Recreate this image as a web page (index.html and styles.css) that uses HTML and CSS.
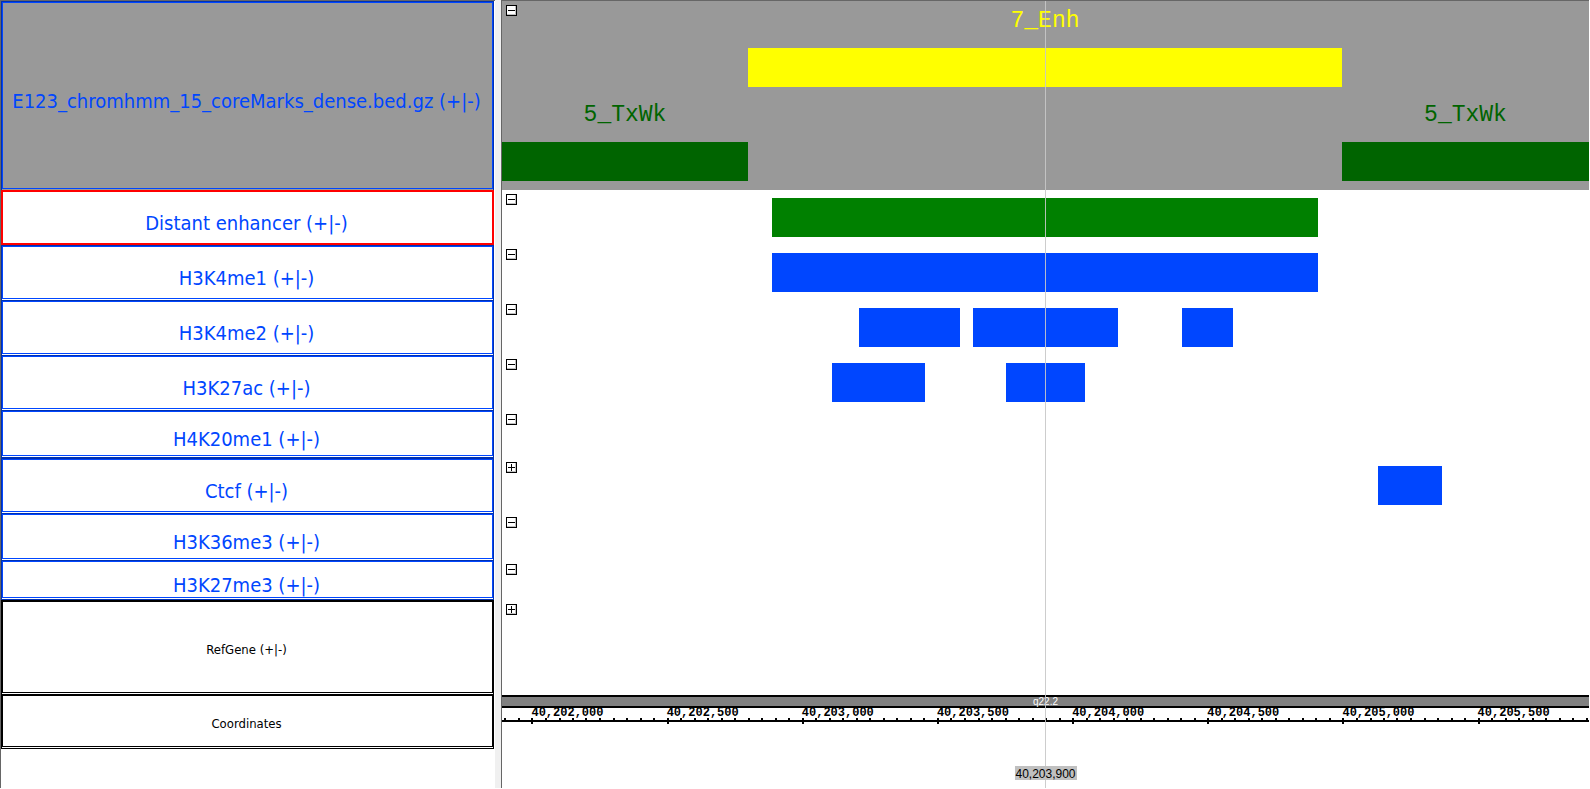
FILE: index.html
```html
<!DOCTYPE html>
<html lang="en">
<head>
<meta charset="utf-8">
<title>Genome browser</title>
<link rel="stylesheet" href="styles.css">
</head>
<body>
<main class="browser">
  <section class="labels" aria-label="Track labels">
    <div class="label label-tall label-shaded"><span>E123_chromhmm_15_coreMarks_dense.bed.gz (+|-)</span></div>
    <div class="label label-mid label-selected"><span>Distant enhancer (+|-)</span></div>
    <div class="label label-mid"><span>H3K4me1 (+|-)</span></div>
    <div class="label label-mid"><span>H3K4me2 (+|-)</span></div>
    <div class="label label-mid"><span>H3K27ac (+|-)</span></div>
    <div class="label label-low label-closed"><span>H4K20me1 (+|-)</span></div>
    <div class="label label-mid"><span>Ctcf (+|-)</span></div>
    <div class="label label-lower"><span>H3K36me3 (+|-)</span></div>
    <div class="label label-lowest label-closed"><span>H3K27me3 (+|-)</span></div>
    <div class="label label-gene label-plain"><span>RefGene (+|-)</span></div>
    <div class="label label-mid label-plain"><span>Coordinates</span></div>
  </section>
  <div class="splitter"></div>
  <section class="tracks" aria-label="Tracks">
    <div class="track label-tall track-shaded">
      <button class="toggle" aria-label="Collapse chromHMM"></button>
      <div class="lane">
        <span class="state enh" style="left:22.63%;width:54.65%">7_Enh</span>
        <i class="bar enh-bar" style="left:22.63%;width:54.65%"></i>
      </div>
      <div class="lane">
        <span class="state txwk" style="left:0;width:22.63%">5_TxWk</span>
        <span class="state txwk" style="left:77.28%;width:22.72%">5_TxWk</span>
        <i class="bar txwk-bar" style="left:0;width:22.63%"></i>
        <i class="bar txwk-bar" style="left:77.28%;width:22.72%"></i>
      </div>
    </div>
    <div class="track label-mid"><button class="toggle" aria-label="Collapse Distant enhancer"></button><i class="bar green" style="left:24.84%;width:50.23%"></i></div>
    <div class="track label-mid"><button class="toggle" aria-label="Collapse H3K4me1"></button><i class="bar" style="left:24.84%;width:50.23%"></i></div>
    <div class="track label-mid"><button class="toggle" aria-label="Collapse H3K4me2"></button><i class="bar" style="left:32.84%;width:9.29%"></i><i class="bar" style="left:43.33%;width:13.34%"></i><i class="bar" style="left:62.56%;width:4.69%"></i></div>
    <div class="track label-mid"><button class="toggle" aria-label="Collapse H3K27ac"></button><i class="bar" style="left:30.36%;width:8.56%"></i><i class="bar" style="left:46.37%;width:7.27%"></i></div>
    <div class="track label-low"><button class="toggle" aria-label="Collapse H4K20me1"></button></div>
    <div class="track label-mid"><button class="toggle plus" aria-label="Expand Ctcf"></button><i class="bar" style="left:80.59%;width:5.89%"></i></div>
    <div class="track label-lower"><button class="toggle" aria-label="Collapse H3K36me3"></button></div>
    <div class="track label-lowest"><button class="toggle" aria-label="Collapse H3K27me3"></button></div>
    <div class="track label-gene"><button class="toggle plus" aria-label="Expand RefGene"></button></div>
    <div class="coords">
      <div class="band">q22.2</div>
      <div class="ruler" id="ruler"></div>
    </div>
    <div class="hairline"></div>
    <output class="position">40,203,900</output>
  </section>
</main>
<script src="ruler.js"></script>
</body>
</html>
```
FILE: ruler.js
```js
// Visible region in base pairs.
const start = 40201891;
const span = 4021;
const ruler = document.getElementById("ruler");
for (let bp = 40201900; bp < start + span; bp += 50) {
  const major = bp % 500 === 0;
  const tick = document.createElement("i");
  tick.className = major ? "tick major" : "tick";
  tick.style.left = ((bp - start) / span * 100).toFixed(2) + "%";
  ruler.append(tick);
  if (major) {
    const text = document.createElement("span");
    text.className = "tick-label";
    text.style.left = tick.style.left;
    text.textContent = bp.toLocaleString("en-US");
    ruler.append(text);
  }
}
```
FILE: styles.css
```css
* { box-sizing: border-box; }
body { margin: 0; background: #fff; }

.browser {
  display: grid;
  grid-template-columns: 495px 6px 1fr;
  min-height: 100vh;
  padding: 0 1px 1px 0;
  font-family: "DejaVu Sans Condensed", "DejaVu Sans", sans-serif;
}

/* Track heights shared by both panes */
.label-tall { height: 189px; }
.label-mid { height: 55px; }
.label-low { height: 48px; }
.label-lower { height: 47px; }
.label-lowest { height: 40px; }
.label-gene { height: 94px; }

.labels {
  border-left: 1px solid #666;
  border-top: 1px solid #666;
  padding-right: 1px;
}
.label {
  display: flex;
  align-items: center;
  justify-content: center;
  position: relative;
  padding: 10px 2px 0 0;
  border: 1px solid #0030b0;
  border-bottom: 0;
  color: #0046ff;
  font-size: 20px;
  line-height: 24px;
  white-space: nowrap;
}
.label::after {
  content: "";
  position: absolute;
  inset: 0 0 1px 0;
  border: 1px solid #0046ff;
}
.label-shaded { background: #999; }
.label-selected, .label-selected::after { border: 1px solid #f00; }
.label-selected::after { inset: 0; }
.label-closed { border-bottom: 1px solid #0030b0; }
.label-plain { color: #000; border-color: #000; font-size: 13px; line-height: 16px; padding-top: 4px; }
.label-plain::after { border-color: #000; }
.label-plain:last-child { border-bottom: 1px solid #000; }

.splitter { background: #f0f0f0; }

.tracks {
  position: relative;
  border-left: 1px solid #666;
  border-top: 1px solid #666;
}
.track { position: relative; padding-top: 8px; }
.track-shaded { background: #999; padding-top: 0; }
.toggle {
  position: absolute;
  z-index: 1;
  left: 4px;
  top: 4px;
  width: 11px;
  height: 11px;
  padding: 0;
  border: 1px solid #000;
  background: linear-gradient(#000, #000) 1px 4px / 7px 1px no-repeat, #fff;
  box-shadow: inset -1px -1px #c0c0c0;
}
.toggle.plus {
  background: linear-gradient(#000, #000) 1px 4px / 7px 1px no-repeat,
    linear-gradient(#000, #000) 4px 1px / 1px 7px no-repeat, #fff;
}
.bar { position: absolute; height: 39px; background: #0046ff; }
.green { background: #008000; }
.lane { position: relative; height: 94px; padding-top: 47px; }
.state {
  position: absolute;
  top: 7px;
  text-align: center;
  font: 23px/26px "Liberation Mono", monospace;
}
.enh { color: #ff0; }
.txwk { color: #006400; }
.enh-bar { background: #ff0; }
.txwk-bar { background: #006400; }

.coords { padding-top: 1px; }
.band {
  height: 13px;
  border: solid #000;
  border-width: 2px 0;
  background: #808080;
  color: #fff;
  font: 10px/10px "Liberation Sans", sans-serif;
  text-align: center;
}
.ruler { position: relative; height: 14px; border-bottom: 2px solid #000; }
.tick { position: absolute; bottom: 0; width: 2px; height: 2px; background: #000; }
.tick.major { bottom: -4px; height: 6px; }
.tick-label { position: absolute; top: -1px; font: bold 12px/12px "Liberation Mono", monospace; }
.hairline {
  position: absolute;
  top: 0;
  bottom: 0;
  left: 50%;
  width: 1px;
  margin-left: -1px;
  background: rgba(200, 200, 200, 0.9);
}
.position {
  position: absolute;
  left: 50%;
  bottom: 8px;
  height: 14px;
  padding: 0 1px;
  transform: translateX(-50%);
  background: #c0c0c0;
  color: #000;
  font: 12px/17px "Liberation Sans", sans-serif;
}
```
